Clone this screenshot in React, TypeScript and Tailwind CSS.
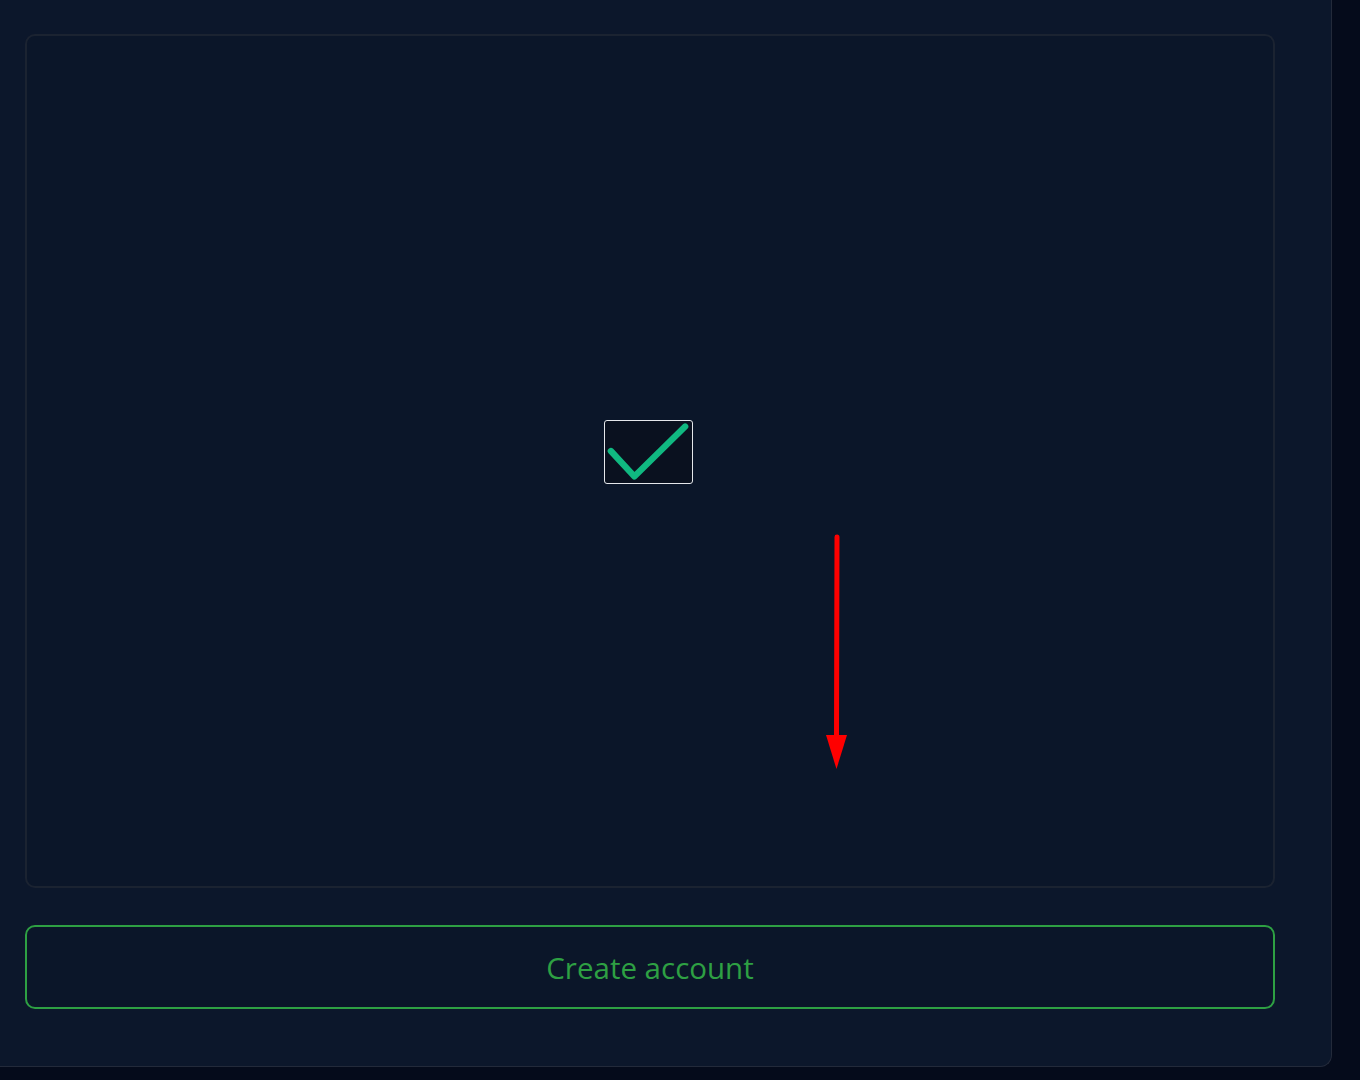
import React from 'react';

function CheckTile() {
  return (
    <div className="w-[89px] h-[64px] rounded-[3px] border border-[#e5e7eb] bg-[#0a111f] mb-[18px] mr-[3px] flex items-center justify-center">
      <svg width="89" height="64" viewBox="0 0 89 64" className="block">
        <path d="M6 31 L30 57 L82 6" fill="none" stroke="#10b981" strokeWidth="6.5" strokeLinecap="round" strokeLinejoin="round" />
      </svg>
    </div>
  );
}

function DownArrow() {
  return (
    <svg className="absolute left-[794px] top-[496px]" width="30" height="240" viewBox="0 0 30 240">
      <line x1="16" y1="5" x2="15.5" y2="208" stroke="#ff0000" strokeWidth="5" strokeLinecap="round" />
      <polygon points="5,203 26,203 15.5,237" fill="#ff0000" />
    </svg>
  );
}

export default function App() {
  return (
    <div className="w-[1360px] h-[1080px] bg-[#050b1b] overflow-hidden" style={{ fontFamily: '"Open Sans", "Noto Sans", sans-serif' }}>
      <div className="w-[1332px] h-[1067px] bg-[#0c172b] border-r border-b border-[#232a3a] rounded-br-xl px-[25px] pt-[34px]">
        {/* Preview area */}
        <div className="relative w-[1250px] h-[854px] border-2 border-[#1b2331] rounded-[10px] bg-[#0b1629] flex items-center justify-center">
          <CheckTile />
          <DownArrow />
        </div>

        {/* Submit */}
        <button
          type="button"
          className="mt-[37px] w-[1250px] h-[84px] pt-[3px] rounded-[10px] border-2 border-[#2ea043] bg-[#0b1629] text-[#2ea043] text-[29.5px] flex items-center justify-center"
        >
          Create account
        </button>
      </div>
    </div>
  );
}
